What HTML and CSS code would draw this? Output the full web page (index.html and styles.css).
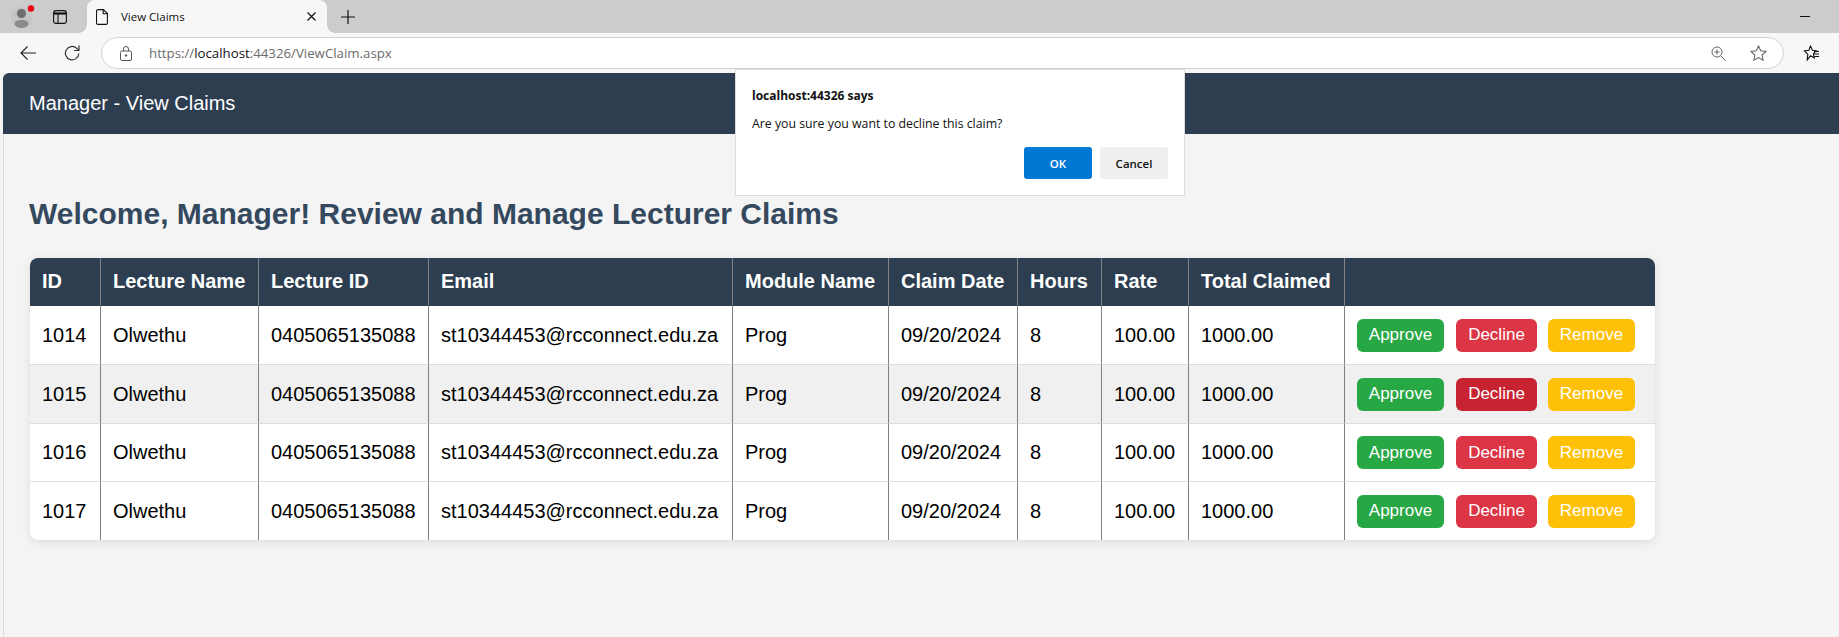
FILE: index.html
```html
<!DOCTYPE html>
<html lang="en">
<head>
  <meta charset="UTF-8">
  <title>View Claims</title>
  <link rel="stylesheet" href="styles.css">
</head>
<body>
  <div class="tabbar">
    <div class="profile">
      <svg width="24" height="24" viewBox="0 0 24 24">
        <circle cx="10.5" cy="12.5" r="10.5" fill="#c4c4c4"/>
        <circle cx="10.5" cy="8.5" r="4.5" fill="#6e6e6e"/>
        <path d="M3.500 19.500c0-3.500 3-4.500 7-4.500s7 1 7 4.500c-1.500 2.500-4 3.500-7 3.500s-5.500-1-7-3.500z" fill="#8c8c8c"/>
        <circle cx="20" cy="3.500" r="3.200" fill="#e60012"/>
      </svg>
    </div>
    <div class="tabs-btn">
      <svg width="14" height="14" viewBox="0 0 14 14" fill="none" stroke="#111" stroke-width="1.100">
        <rect x="0.600" y="0.600" width="12.800" height="12.800" rx="2.500"/>
        <path d="M1 3.500h12" stroke-width="2.200"/>
        <path d="M5 4v9.400"/>
      </svg>
    </div>
    <div class="tab">
      <svg width="12" height="16" viewBox="0 0 12 16" fill="none" stroke="#111" stroke-width="1.100">
        <path d="M2 0.600h5.500l3.900 3.900v9.400a1.500 1.500 0 0 1-1.500 1.500h-7.900a1.500 1.500 0 0 1-1.500-1.500v-11.800a1.500 1.500 0 0 1 1.500-1.500z"/>
        <path d="M7.200 0.600v4.200h4.200"/>
      </svg>
      <span class="tab-title">View Claims</span>
      <svg class="tab-close" width="9" height="9" viewBox="0 0 9 9" stroke="#111" stroke-width="1.200">
        <path d="M0.500 0.500l8 8M8.500 0.500l-8 8"/>
      </svg>
    </div>
    <svg class="new-tab" width="14" height="14" viewBox="0 0 14 14" stroke="#111" stroke-width="1.200">
      <path d="M7 0v14M0 7h14"/>
    </svg>
    <div class="minimize"></div>
  </div>

  <div class="toolbar">
    <svg class="back-icon" width="16" height="14" viewBox="0 0 16 14" fill="none" stroke="#222" stroke-width="1.100">
      <path d="M16 7h-15M7.500 0.500l-6.500 6.500 6.500 6.500"/>
    </svg>
    <svg class="reload-icon" width="16" height="16" viewBox="0 0 16 16" fill="none" stroke="#333" stroke-width="1.200">
      <path d="M14.800 8.500a6.700 6.700 0 1 1-2.200-5.300l2.200 2.200M15 0.500v5h-5"/>
    </svg>
    <div class="address">
      <svg width="12" height="15" viewBox="0 0 12 15" fill="none" stroke="#555" stroke-width="1">
        <rect x="0.500" y="5" width="11" height="9.500" rx="1.500"/>
        <path d="M3.500 5v-2a2.500 2.500 0 0 1 5 0v2"/>
        <circle cx="6" cy="9.500" r="0.800" fill="#555"/>
      </svg>
      <span class="url"><span class="url-dim">https://</span><span class="url-host">localhost</span><span class="url-dim">:44326/ViewClaim.aspx</span></span>
      <svg class="zoom-icon" width="15" height="15" viewBox="0 0 15 15" fill="none" stroke="#666" stroke-width="1">
        <circle cx="6" cy="6" r="5"/>
        <path d="M6 3.500v5M3.500 6h5M9.800 9.800l4.800 4.800"/>
      </svg>
      <svg class="star-icon" width="17" height="16" viewBox="0 0 17 16" fill="none" stroke="#666" stroke-width="1.100">
        <path d="M8.500 1l2.200 4.800 5.300.6-3.900 3.600 1 5.200-4.600-2.600-4.600 2.600 1-5.200-3.900-3.600 5.300-.6z"/>
      </svg>
    </div>
    <svg class="fav-icon" width="17" height="16" viewBox="0 0 17 16" fill="none" stroke="#111" stroke-width="1.100">
      <path d="M7.500 1l1.900 4.300 4 .5-3 2.900 .8 4.300-3.700-2.200-3.300 4.200 .6-5.900-3.400-3.200 4.400-.6z"/>
      <path d="M11 6.500h5M11 9h5M11 11.500h5"/>
    </svg>
  </div>

  <div class="page">
    <header class="page-header">Manager - View Claims</header>
    <main class="content">
      <h1>Welcome, Manager! Review and Manage Lecturer Claims</h1>
      <table class="claims">
        <colgroup>
          <col class="c-id"><col class="c-name"><col class="c-lid"><col class="c-email"><col class="c-module">
          <col class="c-date"><col class="c-hours"><col class="c-rate"><col class="c-total"><col class="c-actions">
        </colgroup>
        <thead>
          <tr>
            <th>ID</th><th>Lecture Name</th><th>Lecture ID</th><th>Email</th><th>Module Name</th>
            <th>Claim Date</th><th>Hours</th><th>Rate</th><th>Total Claimed</th><th></th>
          </tr>
        </thead>
        <tbody>
          <tr>
            <td>1014</td><td>Olwethu</td><td>0405065135088</td><td>st10344453@rcconnect.edu.za</td><td>Prog</td>
            <td>09/20/2024</td><td>8</td><td>100.00</td><td>1000.00</td>
            <td><div class="actions"><button class="btn approve">Approve</button><button class="btn decline">Decline</button><button class="btn remove">Remove</button></div></td>
          </tr>
          <tr>
            <td>1015</td><td>Olwethu</td><td>0405065135088</td><td>st10344453@rcconnect.edu.za</td><td>Prog</td>
            <td>09/20/2024</td><td>8</td><td>100.00</td><td>1000.00</td>
            <td><div class="actions"><button class="btn approve">Approve</button><button class="btn decline hover">Decline</button><button class="btn remove">Remove</button></div></td>
          </tr>
          <tr>
            <td>1016</td><td>Olwethu</td><td>0405065135088</td><td>st10344453@rcconnect.edu.za</td><td>Prog</td>
            <td>09/20/2024</td><td>8</td><td>100.00</td><td>1000.00</td>
            <td><div class="actions"><button class="btn approve">Approve</button><button class="btn decline">Decline</button><button class="btn remove">Remove</button></div></td>
          </tr>
          <tr>
            <td>1017</td><td>Olwethu</td><td>0405065135088</td><td>st10344453@rcconnect.edu.za</td><td>Prog</td>
            <td>09/20/2024</td><td>8</td><td>100.00</td><td>1000.00</td>
            <td><div class="actions"><button class="btn approve">Approve</button><button class="btn decline">Decline</button><button class="btn remove">Remove</button></div></td>
          </tr>
        </tbody>
      </table>
    </main>
  </div>

  <div class="dialog">
    <div class="dialog-title">localhost:44326 says</div>
    <div class="dialog-msg">Are you sure you want to decline this claim?</div>
    <div class="dialog-btns">
      <button class="dlg-btn dlg-ok">OK</button>
      <button class="dlg-btn dlg-cancel">Cancel</button>
    </div>
  </div>
</body>
</html>
```

FILE: styles.css
```css
html, body {
  margin: 0;
  height: 637px;
  overflow: hidden;
}
body {
  font-family: "Liberation Sans", Arial, sans-serif;
  background-color: #f4f4f4;
  position: relative;
}

/* browser chrome */
.tabbar {
  height: 33px;
  background-color: #cccccc;
  display: flex;
  align-items: center;
}
.profile {
  width: 43px;
  height: 33px;
  padding-left: 11px;
  box-sizing: border-box;
  display: flex;
  align-items: center;
}
.tabs-btn {
  width: 44px;
  height: 33px;
  padding-left: 10px;
  box-sizing: border-box;
  display: flex;
  align-items: center;
}
.tab {
  width: 240px;
  height: 33px;
  box-sizing: border-box;
  padding: 0 11px 0 9px;
  background-color: #f7f7f7;
  border-radius: 8px 8px 0 0;
  display: flex;
  align-items: center;
  position: relative;
}
/* the small curves where the tab meets the toolbar */
.tab::before,
.tab::after {
  content: "";
  position: absolute;
  bottom: 0;
  width: 8px;
  height: 8px;
}
.tab::before {
  left: -8px;
  background: radial-gradient(circle at 0 0, #cccccc 7.5px, #f7f7f7 8px);
}
.tab::after {
  right: -8px;
  background: radial-gradient(circle at 100% 0, #cccccc 7.5px, #f7f7f7 8px);
}
.tab-title {
  font-family: "Open Sans", sans-serif;
  font-size: 11.500px;
  color: #111;
  margin-left: 13px;
}
.tab-close {
  margin-left: auto;
}
.new-tab {
  margin-left: 14px;
}
.minimize {
  width: 10px;
  height: 1px;
  background-color: #111;
  margin-left: auto;
  margin-right: 29px;
}
.toolbar {
  height: 40px;
  background-color: #f7f7f7;
  display: flex;
  align-items: center;
}
.back-icon {
  margin-left: 20px;
}
.reload-icon {
  margin-left: 28px;
}
.address {
  width: 1683px;
  height: 32px;
  margin-left: 21px;
  padding: 0 16px 0 18px;
  box-sizing: border-box;
  background-color: #fff;
  border: 1px solid #d2d2d2;
  border-radius: 16px;
  display: flex;
  align-items: center;
}
.url {
  font-family: "Open Sans", sans-serif;
  font-size: 13.250px;
  margin-left: 17px;
}
.url-dim {
  color: #6b6b6b;
}
.url-host {
  color: #111;
}
.zoom-icon {
  margin-left: auto;
}
.star-icon {
  margin-left: 24px;
}
.fav-icon {
  margin-left: 19px;
}

/* page */
.page {
  margin-left: 3px;
  height: 564px;
  border-left: 1px solid #dddddd;
}
.page-header {
  margin-left: -1px;
  height: 61px;
  box-sizing: border-box;
  padding: 0 26px;
  background-color: #2c3e50;
  border-radius: 6px 0 0 0;
  color: #fff;
  font-size: 20px;
  line-height: 61px;
}
.content {
  padding: 0 26px;
}
h1 {
  margin: 0 0 0 -1px;
  padding-top: 61px;
  height: 63px;
  font-size: 30px;
  line-height: 37px;
  color: #34495e;
}
.claims {
  width: 1625px;
  table-layout: fixed;
  border-collapse: separate;
  border-spacing: 0;
  background-color: #fff;
  border-radius: 8px;
  box-shadow: 0 2px 10px rgba(0, 0, 0, 0.1);
  font-size: 20px;
  color: #000;
}
.c-id { width: 71px; }
.c-name { width: 158px; }
.c-lid { width: 170px; }
.c-email { width: 304px; }
.c-module { width: 156px; }
.c-date { width: 129px; }
.c-hours { width: 84px; }
.c-rate { width: 87px; }
.c-total { width: 156px; }
.claims th {
  height: 48px;
  box-sizing: border-box;
  padding: 0 12px 2px;
  text-align: left;
  background-color: #2c3e50;
  color: #fff;
  border-right: 1px solid #808080;
  white-space: nowrap;
}
.claims th:first-child { border-top-left-radius: 8px; }
.claims th:last-child { border-top-right-radius: 8px; border-right: none; }
.claims td {
  height: 58px;
  box-sizing: border-box;
  padding: 0 12px;
  border-right: 1px solid #808080;
  border-bottom: 1px solid #dddddd;
  white-space: nowrap;
}
.claims tbody tr:nth-child(-n+2) td { height: 59px; }
.claims td:last-child { border-right: none; }
.claims tbody tr:nth-child(2) td { background-color: #f0f0f0; }
.claims tbody tr:last-child td { border-bottom: none; }
.actions {
  display: flex;
}
.btn {
  width: 87px;
  height: 33px;
  padding: 0;
  border: none;
  border-radius: 6px;
  color: #fff;
  font-family: inherit;
  font-size: 17px;
}
.approve { background-color: #28a745; margin-right: 12px; }
.decline { width: 81px; background-color: #dc3545; margin-right: 11px; }
.decline.hover { background-color: #c82333; }
.remove { background-color: #ffc107; }

/* alert box */
.dialog {
  position: absolute;
  left: 735px;
  top: 69px;
  width: 450px;
  height: 127px;
  box-sizing: border-box;
  padding: 17px 16px 0;
  background-color: #fff;
  border: 1px solid #dcdcdc;
  font-family: "Open Sans", sans-serif;
  color: #111;
}
.dialog-title {
  font-size: 12px;
  font-weight: bold;
  line-height: 18px;
}
.dialog-msg {
  margin-top: 10px;
  font-size: 12.300px;
  line-height: 18px;
}
.dialog-btns {
  margin-top: 14px;
  display: flex;
  justify-content: flex-end;
  gap: 8px;
}
.dlg-btn {
  width: 68px;
  height: 32px;
  border: none;
  border-radius: 3px;
  font-family: inherit;
  font-size: 11.500px;
  font-weight: 600;
}
.dlg-ok {
  background-color: #0078d4;
  color: #fff;
}
.dlg-cancel {
  background-color: #efefef;
  color: #111;
}
```
